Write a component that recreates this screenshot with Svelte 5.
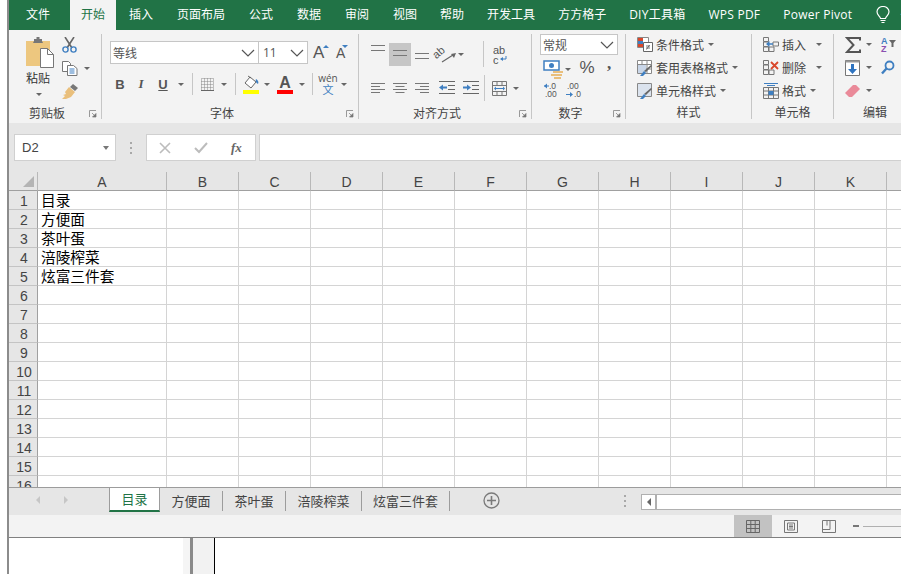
<script lang="ts">
	const tabs = ['插入', '页面布局', '公式', '数据', '审阅', '视图', '帮助', '开发工具', '方方格子', 'DIY工具箱', 'WPS PDF', 'Power Pivot'];
	const columns = ['A', 'B', 'C', 'D', 'E', 'F', 'G', 'H', 'I', 'J', 'K', 'L'];
	const cells = ['目录', '方便面', '茶叶蛋', '涪陵榨菜', '炫富三件套'];
	const rows = Array.from({ length: 16 }, (_, i) => i + 1);
	const sheets = [
		{ name: '方便面', cls: 's1' },
		{ name: '茶叶蛋', cls: 's2' },
		{ name: '涪陵榨菜', cls: 's3' },
		{ name: '炫富三件套', cls: 's4' }
	];
</script>

{#snippet caret()}
	<span class="caret"></span>
{/snippet}

{#snippet chevron()}
	<svg width="14" height="8" viewBox="0 0 14 8"><path d="M1 1l6 6 6-6" fill="none" stroke="#555" stroke-width="1.2" /></svg>
{/snippet}

{#snippet launcher()}
	<span class="launcher">
		<svg width="8" height="8" viewBox="0 0 8 8"><path d="M0.5 7V0.5H7" fill="none" stroke="#999" /><path d="M3 3l3 3M7 3.5V7H3.5z" fill="#777" stroke="#777" stroke-width="0.7" /></svg>
	</span>
{/snippet}

{#snippet lines(widths: number[], align: string, gap: number)}
	<svg width="14" height="14" viewBox="0 0 14 14">
		{#each widths as w, i}
			<rect x={align === 'l' ? 0 : align === 'r' ? 14 - w : (14 - w) / 2} y={2 + i * gap} width={w} height="1" fill="#777" />
		{/each}
	</svg>
{/snippet}

<div class="screen">
	<nav class="tabbar">
		<span class="tab file">文件</span>
		<span class="tab active">开始</span>
		{#each tabs as t}
			<span class="tab">{t}</span>
		{/each}
		<svg class="bulb" width="14" height="18" viewBox="0 0 14 18">
			<path d="M4.5 12.5C4 10 1 9 1 5.8A6 5.3 0 0 1 13 5.8C13 9 10 10 9.5 12.5z" fill="none" stroke="#fff" stroke-width="1.2" />
			<path d="M4.5 14.5h5M5.5 16.5h3" stroke="#fff" stroke-width="1.2" />
		</svg>
		<span class="hint">告诉我</span>
	</nav>

	<div class="ribbon">
		<section class="group g1">
			<div class="body clip">
				<div class="paste">
					<svg width="28" height="31" viewBox="0 0 28 31">
						<rect x="0" y="4" width="24" height="25" fill="#edc77f" />
						<path d="M8 4V2h2.5V0h3v2H16v2l1 2H7z" fill="#777" />
						<path d="M14.5 11.5h7l6 6v13h-13z" fill="#fff" stroke="#777" />
						<path d="M21.5 11.5v6h6" fill="none" stroke="#777" />
					</svg>
					<span class="paste-label">粘贴</span>
					<span class="paste-caret">{@render caret()}</span>
				</div>
				<div class="clip-tools">
					<svg width="15" height="16" viewBox="0 0 15 16">
						<path d="M3 0l7 11M12 0L5 11" stroke="#666" stroke-width="1.6" />
						<circle cx="3.5" cy="12.5" r="2.6" fill="none" stroke="#3f7fc1" stroke-width="1.4" />
						<circle cx="11.5" cy="12.5" r="2.6" fill="none" stroke="#3f7fc1" stroke-width="1.4" />
					</svg>
					<div class="copy">
						<svg width="16" height="15" viewBox="0 0 16 15">
							<path d="M.5.5h6l2 2v8H.5z" fill="#fff" stroke="#777" />
							<path d="M5.5 4.5h6l3.5 3v7H5.5z" fill="#fff" stroke="#777" />
							<path d="M7.5 8h5M7.5 10h5M7.5 12h5" stroke="#3f7fc1" />
						</svg>
						{@render caret()}
					</div>
					<svg width="16" height="15" viewBox="0 0 16 15">
						<path d="M11 0l5 4-3 3-5-4z" fill="#777" />
						<path d="M7 3l6 5-4 5-5 2-4 0 3-3-2-1 3-1-1-2z" fill="#e9bf7c" />
					</svg>
				</div>
			</div>
			<footer><span class="label">剪贴板</span>{@render launcher()}</footer>
		</section>

		<section class="group g2">
			<div class="body">
				<div class="font-top">
					<div class="select font-name"><span>等线</span>{@render chevron()}</div>
					<div class="select font-size"><span>11</span>{@render chevron()}</div>
					<div class="grow-a">
						<span class="big-a">A</span><i class="up"></i>
					</div>
					<div class="grow-a small">
						<span class="small-a">A</span><i class="down"></i>
					</div>
				</div>
				<div class="font-row">
					<b class="fmt">B</b>
					<i class="fmt serif">I</i>
					<u class="fmt">U</u>
					{@render caret()}
					<span class="sep"></span>
					<svg width="13" height="13" viewBox="0 0 13 13">
						<path d="M.5.5h12v12H.5zM.5 6.500h12M6.500.5v12M3.500.5v12M9.500.5v12M.5 3.500h12M.5 9.500h12" fill="none" stroke="#888" stroke-dasharray="1 1" />
						<path d="M0 12.500h13" stroke="#666" />
					</svg>
					{@render caret()}
					<span class="sep"></span>
					<svg width="16" height="19" viewBox="0 0 16 19">
						<path d="M2 8l5-6 6 5-5 6z" fill="#fff" stroke="#666" />
						<path d="M5 1l3 2" stroke="#666" />
						<path d="M13 4c2 1 3 3 2 5-2-1-3-3-2-5z" fill="#3f7fc1" />
						<rect y="15" width="16" height="4" fill="#ffff00" />
					</svg>
					{@render caret()}
					<div class="font-color"><span>A</span><i></i></div>
					{@render caret()}
					<span class="sep"></span>
					<div class="wen"><span>wén</span><em>文</em></div>
					{@render caret()}
				</div>
			</div>
			<footer><span class="label">字体</span>{@render launcher()}</footer>
		</section>

		<section class="group g3">
			<div class="body">
				<div class="align-top">
					<span class="top-a">{@render lines([14, 14], 'c', 5)}</span>
					<span class="mid-a">{@render lines([14, 14], 'c', 5)}</span>
					<span class="bot-a">{@render lines([14, 14], 'c', 5)}</span>
					<svg class="orient" width="24" height="20" viewBox="0 0 24 20">
						<text x="0" y="12" transform="rotate(-40 6 9)" class="mini">ab</text>
						<path d="M9 18l11-7" stroke="#666" stroke-width="1.200" />
						<path d="M23 9l-2 5-3-4z" fill="#666" />
					</svg>
					{@render caret()}
					<span class="sep tall end"></span>
					<svg class="wrap" width="15" height="20" viewBox="0 0 15 20">
						<text x="0" y="9" class="mini">ab</text>
						<text x="0" y="19" class="mini">c</text>
						<path d="M13 11v3H8" fill="none" stroke="#3f7fc1" />
						<path d="M10 12l-3 2 3 2z" fill="#3f7fc1" />
					</svg>
				</div>
				<div class="align-bottom">
					{@render lines([14, 9, 14, 9], 'l', 3)}
					{@render lines([14, 9, 14, 9], 'c', 3)}
					{@render lines([14, 9, 14, 9], 'r', 3)}
					<svg width="16" height="14" viewBox="0 0 16 14">
						<path d="M0 .5h16M9 4.500h7M9 8.500h7M0 12.500h16" stroke="#666" />
						<path d="M0 6.500l4-3v2h4v2H4v2z" fill="#3f7fc1" />
					</svg>
					<svg width="16" height="14" viewBox="0 0 16 14">
						<path d="M0 .5h16M9 4.500h7M9 8.500h7M0 12.500h16" stroke="#666" />
						<path d="M8 6.500l-4-3v2H0v2h4v2z" fill="#3f7fc1" />
					</svg>
					<span class="sep tall"></span>
					<svg width="15" height="15" viewBox="0 0 15 15">
						<path d="M.5.5h14v14H.5zM.5 4.500h14M.5 10.500h14M5 .5v4M10 .5v4M5 10.500v4M10 10.500v4" fill="none" stroke="#777" />
						<path d="M3 7.500h9" stroke="#3f7fc1" />
						<path d="M2 7.500l2-2v4zM13 7.500l-2-2v4z" fill="#3f7fc1" />
					</svg>
					{@render caret()}
				</div>
			</div>
			<footer><span class="label">对齐方式</span>{@render launcher()}</footer>
		</section>

		<section class="group g4">
			<div class="body">
				<div class="select num-format"><span>常规</span>{@render chevron()}</div>
				<div class="num-row">
					<svg width="20" height="19" viewBox="0 0 20 19">
						<rect x="1" y="1" width="15" height="9" fill="#fff" stroke="#3f7fc1" stroke-width="1.500" />
						<circle cx="8.500" cy="5.500" r="2.500" fill="#3f7fc1" />
						<path d="M10 11h10v2H10zM8 14h11v2H8zM11 17h7v2h-7z" fill="#e9bf7c" />
					</svg>
					{@render caret()}
					<span class="percent">%</span>
					<span class="comma">,</span>
				</div>
				<div class="dec-row">
					<svg width="15" height="16" viewBox="0 0 15 16">
						<text x="5" y="7" class="dec">.0</text>
						<text x="1" y="15" class="dec">.00</text>
						<path d="M0 4h5" stroke="#3f7fc1" />
						<path d="M0 4l3-2.500v5z" fill="#3f7fc1" />
					</svg>
					<svg width="15" height="16" viewBox="0 0 15 16">
						<text x="1" y="7" class="dec">.00</text>
						<text x="8" y="15" class="dec">.0</text>
						<path d="M0 12.500h6" stroke="#3f7fc1" />
						<path d="M7 12.500l-3-2.500v5z" fill="#3f7fc1" />
					</svg>
				</div>
			</div>
			<footer><span class="label">数字</span>{@render launcher()}</footer>
		</section>

		<section class="group g5">
			<div class="body stack">
				<div class="cmd">
					<svg width="16" height="15" viewBox="0 0 16 15">
						<path d="M.5.5h11v10H.5z" fill="#fff" stroke="#888" />
						<path d="M1 1h5v3H1z" fill="#d9472b" /><path d="M1 4h5v3H1z" fill="#3f7fc1" /><path d="M1 7h5v3H1z" fill="#d9472b" />
						<path d="M6.500 5.500h9v9h-9z" fill="#fff" stroke="#666" />
						<path d="M9 9h4M9 11h4M12.500 8l-3 4.500" stroke="#555" stroke-width="0.800" />
					</svg>
					<span>条件格式</span>{@render caret()}
				</div>
				<div class="cmd">
					<svg width="16" height="16" viewBox="0 0 16 16">
						<path d="M.5.5h14v13H.5zM.5 4.500h14M.5 9h14M5 .5v13M10 .5v13" fill="#fff" stroke="#888" />
						<path d="M1 5h8v8H1z" fill="#c9d6e8" />
						<path d="M15 6L9 12l-2-1 7-6z" fill="#666" /><path d="M7 11l2 2-3 3H3z" fill="#3f7fc1" />
					</svg>
					<span>套用表格格式</span>{@render caret()}
				</div>
				<div class="cmd">
					<svg width="16" height="16" viewBox="0 0 16 16">
						<path d="M.5.5h14v13H.5z" fill="#dbe3ee" stroke="#888" />
						<path d="M15 6L9 12l-2-1 7-6z" fill="#666" /><path d="M7 11l2 2-3 3H3z" fill="#3f7fc1" />
					</svg>
					<span>单元格样式</span>{@render caret()}
				</div>
			</div>
			<footer class="center"><span class="label">样式</span></footer>
		</section>

		<section class="group g6">
			<div class="body stack">
				<div class="cmd cell-cmd">
					<svg width="16" height="15" viewBox="0 0 16 15">
						<path d="M.5.5h5v4h-5zM.5 5h5v4.500h-5zM.5 10h5v4.500h-5zM10 5h5.500v4H10zM6 10h5v4.500H6z" fill="none" stroke="#777" />
						<path d="M10 7H5" stroke="#3f7fc1" stroke-width="1.500" />
						<path d="M3 7l3.500-3v6z" fill="#3f7fc1" />
					</svg>
					<span>插入</span><span class="push">{@render caret()}</span>
				</div>
				<div class="cmd cell-cmd">
					<svg width="16" height="15" viewBox="0 0 16 15">
						<path d="M.5.5h5v4h-5zM.5 5h5v4.500h-5zM.5 10h5v4.500h-5zM6 10h5v4.500H6z" fill="none" stroke="#777" />
						<path d="M8 2l7 7M15 2L8 9" stroke="#d9472b" stroke-width="1.800" />
					</svg>
					<span>删除</span><span class="push">{@render caret()}</span>
				</div>
				<div class="cmd cell-cmd">
					<svg width="16" height="16" viewBox="0 0 16 16">
						<path d="M1 .5h14M4 2.500h8" stroke="#3f7fc1" />
						<path d="M.5 4.500h15v11H.5zM.5 8h15M.5 12h15M5.500 4.500v11M10.500 4.500v11" fill="none" stroke="#777" />
						<path d="M5.500 8h5v4h-5z" fill="#3f7fc1" />
					</svg>
					<span>格式</span>{@render caret()}
				</div>
			</div>
			<footer class="center"><span class="label">单元格</span></footer>
		</section>

		<section class="group g7">
			<div class="body stack">
				<div class="edit">
					<svg width="16" height="16" viewBox="0 0 16 16"><path d="M15 3.500V1H2l6.500 7L2 15h13v-2.500" fill="none" stroke="#555" stroke-width="2" /></svg>
					{@render caret()}
					<svg class="edit-right" width="16" height="17" viewBox="0 0 16 17">
						<text x="0" y="8" class="az blue">A</text>
						<text x="0" y="16" class="az purple">Z</text>
						<path d="M8 4h7l-2.500 3v4h-2V7z" fill="#666" />
					</svg>
				</div>
				<div class="edit">
					<svg width="15" height="16" viewBox="0 0 15 16">
						<path d="M.5.500h14v15H.5z" fill="#fff" stroke="#777" />
						<path d="M.5.500h14v2H.5z" fill="#999" />
						<path d="M6 4h3v5h3l-4.500 5L3 9h3z" fill="#2f74c0" />
					</svg>
					{@render caret()}
					<svg class="edit-right" width="14" height="15" viewBox="0 0 14 15">
						<circle cx="8.500" cy="5.500" r="4" fill="none" stroke="#3f7fc1" stroke-width="1.800" />
						<path d="M5.500 8.500L1 13.500" stroke="#3f7fc1" stroke-width="2.400" />
					</svg>
				</div>
				<div class="edit">
					<svg width="15" height="14" viewBox="0 0 15 14">
						<path d="M0 9l8-8h3l4 4-8 8H4z" fill="#ea8a99" />
					</svg>
					{@render caret()}
				</div>
			</div>
			<footer class="center"><span class="label">编辑</span></footer>
		</section>
	</div>

	<div class="formula">
		<div class="namebox"><span>D2</span><i class="name-caret"></i></div>
		<div class="dots"><i></i><i></i><i></i></div>
		<div class="fx-box">
			<svg width="12" height="12" viewBox="0 0 12 12"><path d="M1 1l10 10M11 1L1 11" stroke="#bcbcbc" stroke-width="1.600" /></svg>
			<svg width="14" height="12" viewBox="0 0 14 12"><path d="M1 6l4 4 8-9" fill="none" stroke="#bcbcbc" stroke-width="2" /></svg>
			<span class="fx">fx</span>
		</div>
		<div class="formula-input"></div>
	</div>

	<div class="grid">
		<div class="row head">
			<div class="corner"><i></i></div>
			{#each columns as c}
				<div class="col-head">{c}</div>
			{/each}
		</div>
		{#each rows as r, i}
			<div class="row">
				<div class="row-head">{r}</div>
				{#each columns as c, j}
					<div class="cell">{j === 0 && cells[i] ? cells[i] : ''}</div>
				{/each}
			</div>
		{/each}
	</div>

	<div class="sheetbar">
		<div class="sheet-nav">
			<i class="nav-l"></i>
			<i class="nav-r"></i>
		</div>
		<div class="sheet current">目录</div>
		{#each sheets as s}
			<div class="sheet {s.cls}">{s.name}</div>
		{/each}
		<svg class="add" width="17" height="17" viewBox="0 0 17 17">
			<circle cx="8.500" cy="8.500" r="7.500" fill="none" stroke="#7a7a7a" stroke-width="1.300" />
			<path d="M8.500 4v9M4 8.500h9" stroke="#7a7a7a" stroke-width="1.600" />
		</svg>
		<div class="dots sheet-dots"><i></i><i></i><i></i></div>
		<div class="hscroll">
			<div class="hscroll-btn"><i></i></div>
		</div>
	</div>

	<div class="status">
		<div class="view on">
			<svg width="14" height="13" viewBox="0 0 14 13"><path d="M.5.500h13v12H.5zM.5 4.500h13M.5 8.500h13M4.800.5v12M9.200.5v12" fill="none" stroke="#666" /></svg>
		</div>
		<div class="view">
			<svg width="14" height="13" viewBox="0 0 14 13"><path d="M.5.500h13v12H.5z" fill="none" stroke="#777" /><path d="M3.500 3h7v7h-7zM5 5h4M5 6.500h4M5 8h4" fill="none" stroke="#777" /></svg>
		</div>
		<div class="view">
			<svg width="14" height="13" viewBox="0 0 14 13"><path d="M.5.500h13v12H.5zM.5 9.500h7.500V.5M5 .5v5" fill="none" stroke="#777" /></svg>
		</div>
		<i class="zoom-minus"></i>
		<i class="zoom-line"></i>
	</div>

	<div class="under">
		<i class="u1"></i><i class="u2"></i><i class="u3"></i>
	</div>
</div>

<style>
	:global(body) {
		margin: 0;
		overflow: hidden;
		background: #fff;
		font-family: 'Open Sans', 'Noto Sans CJK SC', sans-serif;
	}

	.screen {
		display: flex;
		flex-direction: column;
		box-sizing: content-box;
		width: 892px;
		height: 574px;
		margin-left: 7px;
		border-left: 2px solid #8c8c8c;
		overflow: hidden;
		font-size: 12px;
		color: #444;
	}

	/* tabs */
	.tabbar {
		display: flex;
		flex: none;
		align-items: center;
		height: 30px;
		background: #217346;
		overflow: hidden;
	}

	.tab {
		flex: none;
		padding: 0 12px;
		line-height: 30px;
		color: #fff;
		white-space: nowrap;
	}

	.tab:nth-child(n + 9) {
		margin-left: -1px;
	}

	.tab:nth-child(n + 12) {
		letter-spacing: 0.25px;
	}

	.tab.file {
		width: 61px;
		padding: 0 0 0 17px;
		box-sizing: border-box;
	}

	.tab.active {
		width: 46px;
		margin-right: 1px;
		padding: 0;
		box-sizing: border-box;
		text-align: center;
		background: #f3f3f3;
		color: #217346;
	}

	.bulb {
		flex: none;
		margin-left: 12px;
	}

	.hint {
		flex: none;
		padding-left: 10px;
		color: #fff;
		white-space: nowrap;
	}

	/* ribbon */
	.ribbon {
		display: flex;
		flex: none;
		height: 93px;
		padding-top: 4px;
		box-sizing: border-box;
		background: #f3f3f3;
	}

	.group {
		display: flex;
		flex: none;
		flex-direction: column;
		box-sizing: border-box;
		height: 85px;
		border-right: 1px solid #c6c6c6;
	}

	.g1 { width: 93px; }
	.g2 { width: 257px; }
	.g3 { width: 173px; }
	.g4 { width: 94px; }
	.g5 { width: 126px; }
	.g6 { width: 82px; }
	.g7 { width: 82px; border-right: none; }

	.body {
		flex: none;
		height: 72px;
		box-sizing: border-box;
	}

	.group footer {
		display: flex;
		align-items: center;
		height: 14px;
		margin-top: 1px;
		line-height: 14px;
	}

	.label {
		flex: 1;
		text-align: center;
		color: #444;
	}

	.launcher {
		display: flex;
		flex: none;
		justify-content: center;
		width: 16px;
	}

	.sep {
		justify-self: center;
		width: 1px;
		height: 22px;
		background: #c6c6c6;
	}

	.sep.tall {
		height: 26px;
	}

	.sep.end {
		justify-self: end;
		margin-right: 4px;
	}

	.caret {
		display: inline-block;
		justify-self: center;
		width: 0;
		height: 0;
		border-left: 3px solid transparent;
		border-right: 3px solid transparent;
		border-top: 3px solid #666;
	}

	.select {
		display: flex;
		align-items: center;
		justify-content: space-between;
		box-sizing: border-box;
		background: #fff;
		border: 1px solid #c6c6c6;
		color: #555;
		padding: 0 3px 0 2px;
	}

	/* clipboard */
	.clip {
		display: flex;
		padding: 3px 0 0 17px;
	}

	.paste {
		display: flex;
		flex-direction: column;
		width: 36px;
		flex: none;
	}

	.paste-label {
		margin-top: 2px;
		line-height: 17px;
		color: #333;
	}

	.paste-caret {
		display: block;
		margin: 5px 0 0 10px;
		line-height: 0;
	}

	.clip-tools {
		display: flex;
		flex-direction: column;
		gap: 8px;
		padding-left: 0;
	}

	.copy {
		display: flex;
		align-items: center;
		gap: 6px;
	}

	/* font */
	.font-top {
		display: flex;
		align-items: center;
		height: 23px;
		margin: 7px 0 0 8px;
	}

	.font-name {
		width: 149px;
		height: 23px;
		font-size: 12px;
	}

	.font-size {
		width: 49px;
		height: 23px;
		border-left: none;
		padding-left: 4px;
	}

	.grow-a {
		position: relative;
		box-sizing: border-box;
		width: 23px;
		padding-left: 5px;
		font: 17px 'Liberation Sans', sans-serif;
		color: #555;
	}

	.grow-a.small {
		width: 18px;
		padding-left: 5px;
	}

	.small-a {
		font-size: 14px;
	}

	.up, .down {
		position: absolute;
		top: 2px;
		width: 0;
		height: 0;
		border-left: 3px solid transparent;
		border-right: 3px solid transparent;
	}

	.up { right: 2px; border-bottom: 3px solid #3f7fc1; }
	.down { right: 1px; border-top: 3px solid #3f7fc1; }

	.font-row {
		display: grid;
		grid-template-columns: 20px 22px 22px 14px 8px 22px 12px 10px 22px 10px 26px 8px 12px 20px 12px;
		align-items: center;
		justify-items: center;
		height: 24px;
		margin: 8px 0 0 8px;
	}

	.fmt {
		font: bold 13px 'Liberation Sans', sans-serif;
		color: #555;
	}

	.fmt.serif {
		font: italic bold 13px 'Liberation Serif', serif;
	}

	.font-color {
		display: flex;
		flex-direction: column;
		align-items: center;
		width: 16px;
		font: bold 16px/15px 'Liberation Sans', sans-serif;
		color: #555;
	}

	.font-color i {
		width: 16px;
		height: 4px;
		background: #ff0000;
	}

	.wen {
		display: flex;
		flex-direction: column;
		align-items: center;
		line-height: 11px;
		font-size: 10px;
		color: #555;
	}

	.wen em {
		font-style: normal;
		font-size: 11px;
		color: #3f7fc1;
	}

	/* alignment */
	.align-top {
		display: grid;
		grid-template-columns: 22px 22px 22px 24px 8px 23px 24px;
		align-items: center;
		justify-items: center;
		height: 23px;
		margin: 7px 0 0 8px;
	}

	.top-a, .bot-a, .mid-a {
		display: flex;
		align-items: center;
		justify-content: center;
	}

	.top-a {
		align-self: start;
		margin-top: 2px;
	}

	.bot-a {
		align-self: start;
		margin-top: 10px;
	}

	.mid-a {
		width: 22px;
		height: 23px;
		background: #c6c6c6;
		align-items: flex-start;
		padding-top: 5px;
		box-sizing: border-box;
	}

	.orient {
		overflow: visible;
	}

	.wrap {
		margin-top: 2px;
	}

	.mini {
		font: 11px 'Liberation Sans', sans-serif;
		fill: #555;
	}

	.align-bottom {
		display: grid;
		grid-template-columns: 22px 22px 22px 28px 19px 8px 22px 12px;
		align-items: center;
		justify-items: center;
		height: 18px;
		margin: 11px 0 0 8px;
	}

	/* number */
	.num-format {
		width: 78px;
		height: 21px;
		margin-left: 8px;
	}

	.num-row {
		display: grid;
		grid-template-columns: 22px 8px 30px 14px;
		align-items: center;
		justify-items: center;
		height: 20px;
		margin: 4px 0 0 10px;
	}

	.percent {
		font: 17px/17px 'Liberation Sans', sans-serif;
		color: #555;
		margin-bottom: 3px;
	}

	.comma {
		font: bold 17px/8px 'Liberation Serif', serif;
		color: #555;
		margin-bottom: 10px;
	}

	.dec-row {
		display: grid;
		grid-template-columns: 18px 26px;
		justify-items: center;
		margin: 3px 0 0 10px;
	}

	.dec-row svg {
		overflow: visible;
	}

	.dec {
		font: 8.500px 'Liberation Sans', sans-serif;
		fill: #555;
	}

	/* styles / cells / editing */
	.stack {
		display: flex;
		flex-direction: column;
		padding-left: 11px;
		margin-top: -1px;
	}

	.cmd {
		display: flex;
		align-items: center;
		gap: 3px;
		height: 23px;
		white-space: nowrap;
		color: #444;
	}

	.cmd .caret {
		margin-left: 1px;
	}

	.cell-cmd .push {
		display: flex;
		margin-left: 6px;
	}

	.edit {
		display: grid;
		grid-template-columns: 17px 14px auto;
		align-items: center;
		height: 23px;
	}

	.edit-right {
		margin-left: 5px;
		overflow: visible;
	}

	.az {
		font: bold 9px 'Liberation Sans', sans-serif;
	}

	.blue { fill: #3f7fc1; }
	.purple { fill: #8a4fb0; }

	/* formula bar */
	.formula {
		display: flex;
		flex: none;
		align-items: flex-start;
		height: 49px;
		padding: 11px 0 0 5px;
		box-sizing: border-box;
		background: #e6e6e6;
	}

	.namebox {
		display: flex;
		flex: none;
		align-items: center;
		justify-content: space-between;
		box-sizing: border-box;
		width: 102px;
		height: 27px;
		padding: 0 6px 0 7px;
		background: #fff;
		border: 1px solid #d0d0d0;
		font: 13px 'Liberation Sans', sans-serif;
		color: #444;
	}

	.name-caret {
		width: 0;
		height: 0;
		border-left: 3.500px solid transparent;
		border-right: 3.500px solid transparent;
		border-top: 4px solid #777;
	}

	.dots {
		display: flex;
		flex: none;
		flex-direction: column;
		align-items: center;
		justify-content: center;
		gap: 3px;
		width: 30px;
		height: 27px;
	}

	.dots i {
		width: 2px;
		height: 2px;
		background: #a8a8a8;
	}

	.fx-box {
		display: flex;
		flex: none;
		align-items: center;
		box-sizing: border-box;
		gap: 23px;
		width: 110px;
		height: 27px;
		padding-left: 12px;
		background: #fff;
		border: 1px solid #d0d0d0;
	}

	.fx {
		font: italic bold 13px 'Liberation Serif', serif;
		color: #666;
	}

	.formula-input {
		flex: 1;
		height: 27px;
		margin-left: 3px;
		box-sizing: border-box;
		background: #fff;
		border: 1px solid #d0d0d0;
		border-right: none;
	}

	/* grid */
	.grid {
		flex: none;
		height: 315px;
		overflow: hidden;
		background: #fff;
	}

	.row {
		display: grid;
		grid-template-columns: 29px 129px repeat(11, 72px);
		height: 19px;
		font: 14px/20px 'Liberation Sans', 'Noto Sans CJK SC', sans-serif;
	}

	.row.head {
		background: #e6e6e6;
	}

	.corner {
		position: relative;
		box-sizing: border-box;
		border-right: 1px solid #b8b8b8;
		border-bottom: 1px solid #a0a0a0;
	}

	.corner i {
		position: absolute;
		right: 3px;
		bottom: 3px;
		width: 0;
		height: 0;
		border-left: 11px solid transparent;
		border-bottom: 11px solid #b4b4b4;
	}

	.col-head {
		box-sizing: border-box;
		height: 19px;
		overflow: hidden;
		border-right: 1px solid #b8b8b8;
		border-bottom: 1px solid #a0a0a0;
		text-align: center;
		color: #444;
	}

	.row-head {
		box-sizing: border-box;
		height: 19px;
		overflow: hidden;
		background: #e6e6e6;
		border-right: 1px solid #a0a0a0;
		border-bottom: 1px solid #c4c4c4;
		text-align: center;
		padding-left: 2px;
		color: #444;
	}

	.cell {
		box-sizing: border-box;
		padding-left: 3px;
		border-right: 1px solid #d4d4d4;
		border-bottom: 1px solid #d4d4d4;
		font: 14.670px/18px 'Noto Sans CJK SC', sans-serif;
		color: #000;
		white-space: nowrap;
		overflow: visible;
	}

	/* sheet tabs */
	.sheetbar {
		display: flex;
		flex: none;
		align-items: flex-start;
		box-sizing: border-box;
		height: 28px;
		background: #e6e6e6;
		border-top: 1px solid #9c9c9c;
		font-size: 13px;
	}

	.sheet-nav {
		display: flex;
		flex: none;
		align-items: center;
		gap: 24px;
		width: 100px;
		height: 24px;
		padding-left: 27px;
		box-sizing: border-box;
	}

	.nav-l, .nav-r {
		width: 0;
		height: 0;
		border-top: 4px solid transparent;
		border-bottom: 4px solid transparent;
	}

	.nav-l { border-right: 4px solid #c6c6c6; }
	.nav-r { border-left: 4px solid #c6c6c6; }

	.sheet {
		flex: none;
		box-sizing: border-box;
		height: 20px;
		margin-top: 3px;
		line-height: 20px;
		text-align: center;
		color: #444;
		border-right: 1px solid #9c9c9c;
	}

	.sheet.current {
		width: 51px;
		height: 24px;
		margin-top: 0;
		line-height: 23px;
		background: #fff;
		color: #217346;
		border-left: 1px solid #9c9c9c;
		border-bottom: 2px solid #217346;
	}

	.s1 { width: 63px; }
	.s2 { width: 63px; }
	.s3 { width: 76px; }
	.s4 { width: 88px; }

	.add {
		flex: none;
		margin: 4px 0 0 33px;
	}

	.sheet-dots {
		height: 26px;
		width: 30px;
		margin-left: 110px;
	}

	.hscroll {
		flex: 1;
		box-sizing: border-box;
		height: 16px;
		margin: 6px 0 0 1px;
		background: #fff;
		border: 1px solid #b0b0b0;
		border-right: none;
	}

	.hscroll-btn {
		display: flex;
		align-items: center;
		justify-content: center;
		box-sizing: border-box;
		width: 15px;
		height: 14px;
		border-right: 2px solid #b0b0b0;
	}

	.hscroll-btn i {
		width: 0;
		height: 0;
		border-top: 4px solid transparent;
		border-bottom: 4px solid transparent;
		border-right: 4px solid #666;
	}

	/* status bar */
	.status {
		display: flex;
		flex: none;
		align-items: center;
		box-sizing: border-box;
		height: 23px;
		padding-left: 725px;
		background: #f3f3f3;
		border-bottom: 1px solid #808080;
	}

	.view {
		display: flex;
		flex: none;
		align-items: center;
		justify-content: center;
		width: 38px;
		height: 22px;
	}

	.view.on {
		background: #c2c2c2;
	}

	.zoom-minus {
		flex: none;
		width: 6px;
		height: 2px;
		margin-left: 5px;
		background: #777;
	}

	.zoom-line {
		flex: 1;
		height: 1px;
		margin-left: 4px;
		background: #b0b0b0;
	}

	/* window behind */
	.under {
		display: flex;
		flex: 1;
		padding-left: 174px;
		background: #fff;
	}

	.u1 {
		width: 7px;
		background: #f5f5f5;
	}

	.u2 {
		width: 3px;
		background: #8a8a8a;
	}

	.u3 {
		width: 21px;
		background: #f2f2f2;
		border-right: 1px solid #000;
	}
</style>
